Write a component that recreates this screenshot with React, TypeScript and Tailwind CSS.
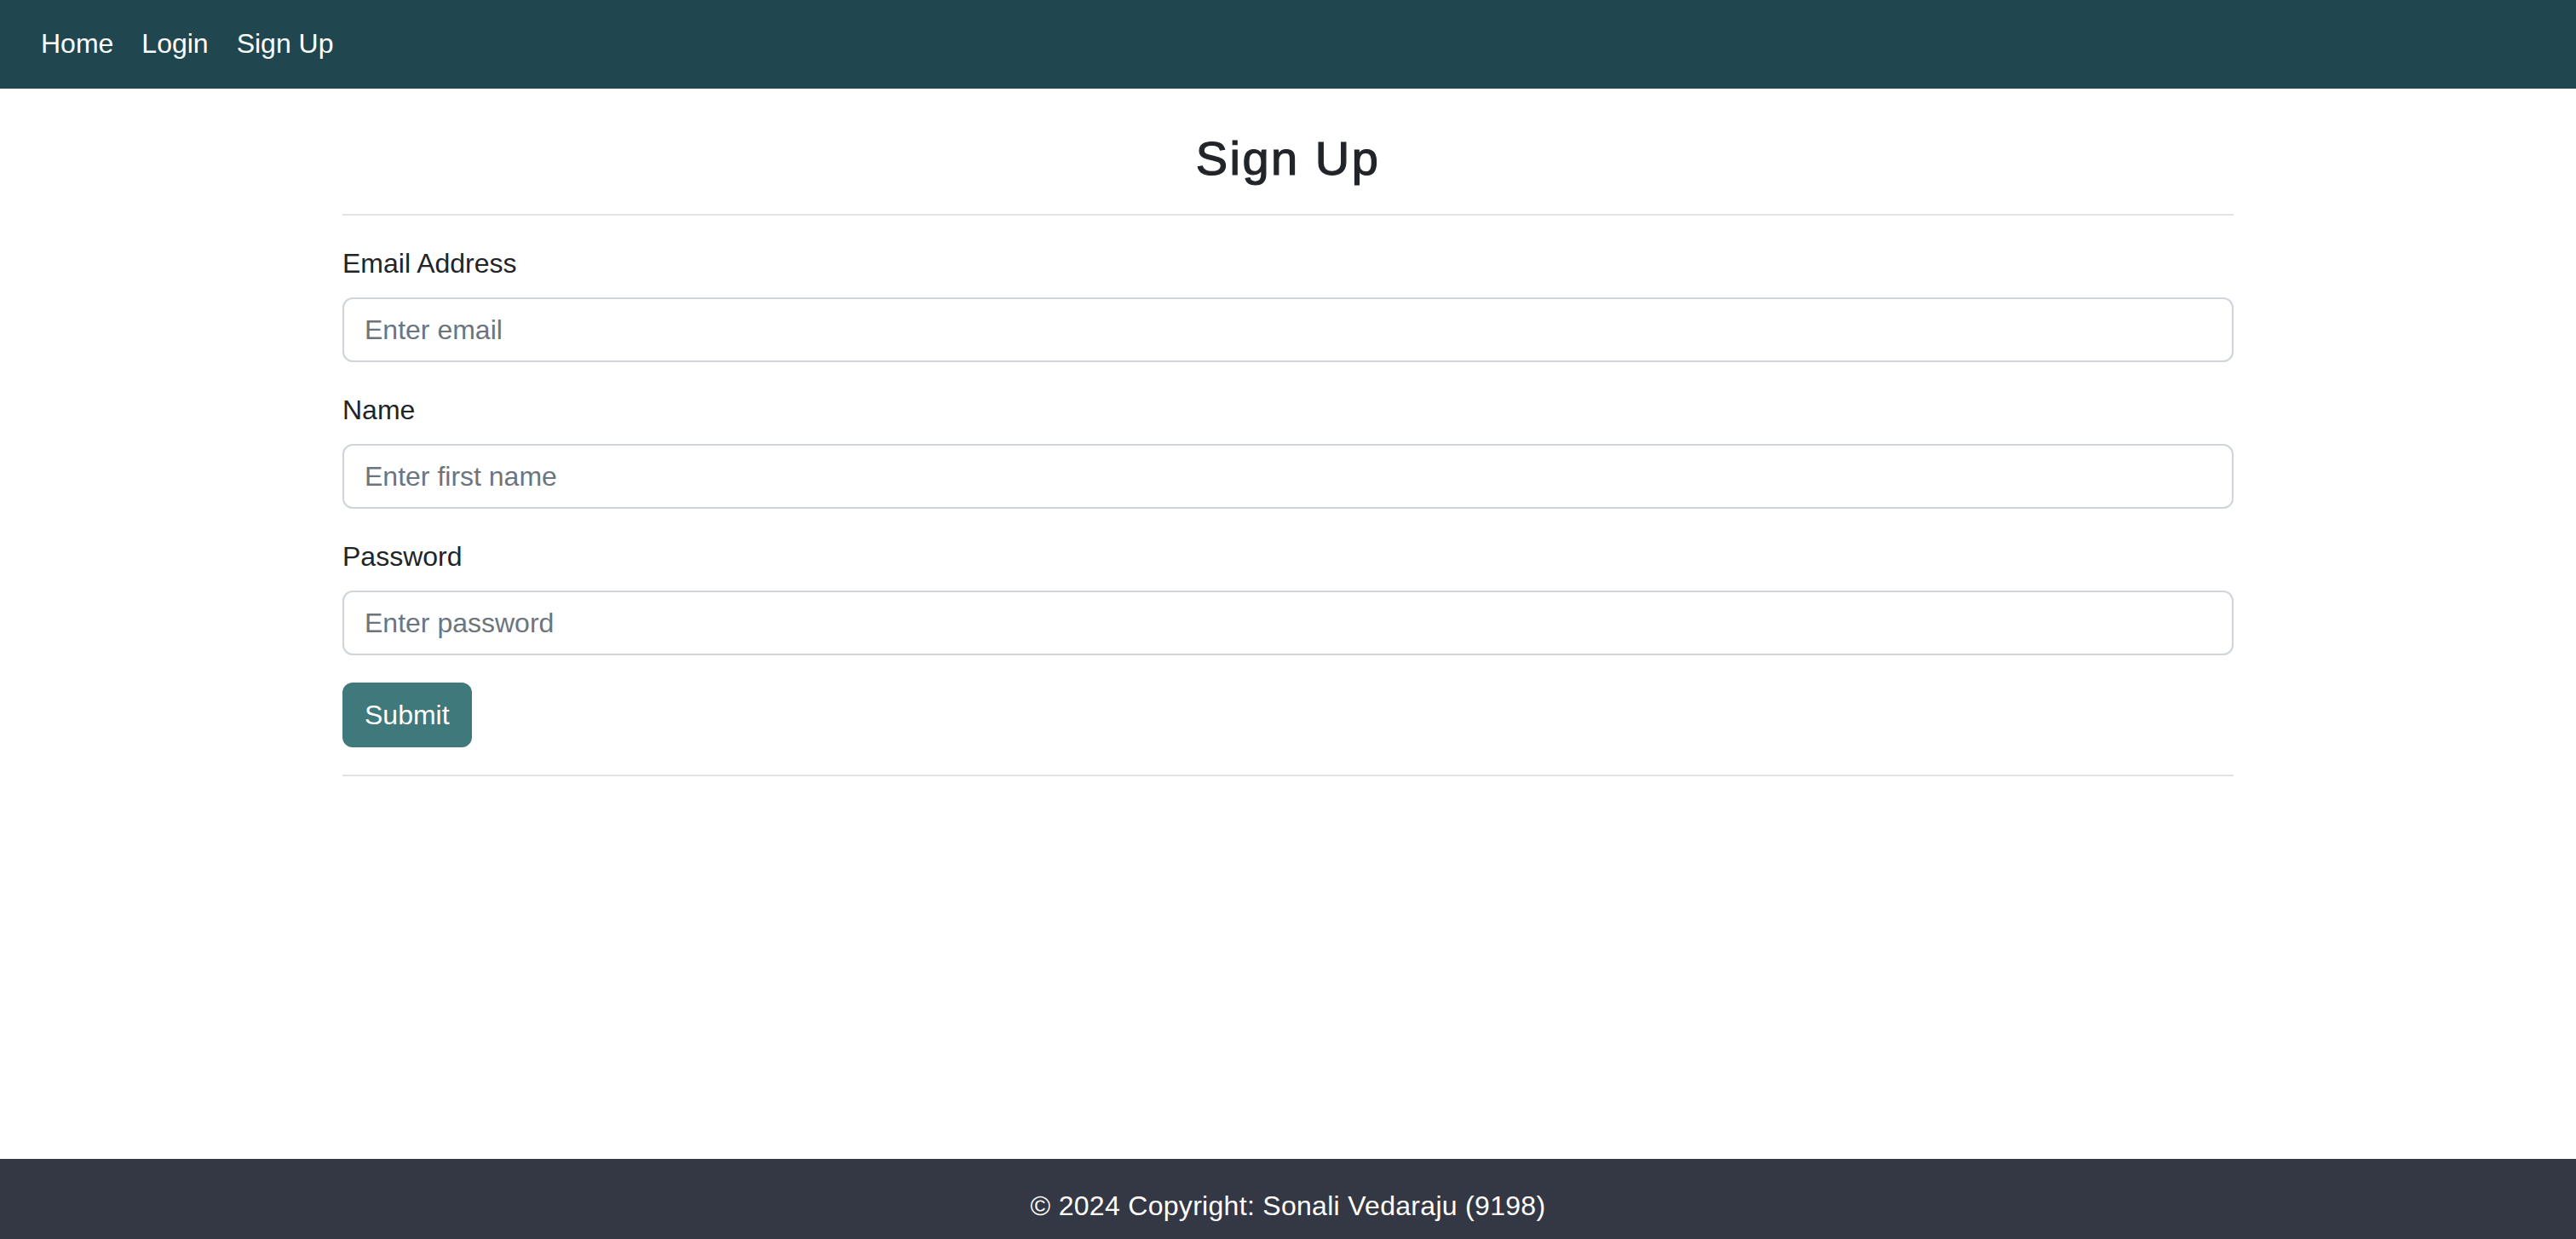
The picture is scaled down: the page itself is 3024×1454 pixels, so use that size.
export default function App() {
  return (
    <div className="min-h-screen flex flex-col bg-white text-[#212529] font-['Liberation_Sans',Arial,sans-serif]">
      {/* Navbar */}
      <nav className="h-[104px] bg-[#20474f] flex items-center pl-[32px] pb-[2px]">
        <a href="#" className="px-[16px] text-[32px] leading-[48px] text-white">
          Home
        </a>
        <a href="#" className="px-[17px] text-[32px] leading-[48px] text-white">
          Login
        </a>
        <a href="#" className="px-[16px] text-[32px] leading-[48px] text-white">
          Sign Up
        </a>
      </nav>

      {/* Form */}
      <main className="w-[2220px] mx-auto pt-[48px]">
        <h2 className="text-center text-[56px] leading-[67px] font-normal tracking-[2.5px] [-webkit-text-stroke:1.2px_#212529]">
          Sign Up
        </h2>
        <hr className="my-[32px] border-0 border-t-2 border-[#e2e3e4]" />

        <form onSubmit={(e) => e.preventDefault()}>
          <div className="mb-[32px]">
            <label className="block mb-[16px] text-[32px] leading-[48px]">
              Email Address
            </label>
            <input
              type="email"
              placeholder="Enter email"
              className="block w-full h-[76px] px-[24px] text-[32px] border-2 border-[#ced4da] rounded-[12px] placeholder:text-[#6c757d] outline-none"
            />
          </div>
          <div className="mb-[32px]">
            <label className="block mb-[16px] text-[32px] leading-[48px]">
              Name
            </label>
            <input
              type="text"
              placeholder="Enter first name"
              className="block w-full h-[76px] px-[24px] text-[32px] border-2 border-[#ced4da] rounded-[12px] placeholder:text-[#6c757d] outline-none"
            />
          </div>
          <div className="mb-[32px]">
            <label className="block mb-[16px] text-[32px] leading-[48px]">
              Password
            </label>
            <input
              type="password"
              placeholder="Enter password"
              className="block w-full h-[76px] px-[24px] text-[32px] border-2 border-[#ced4da] rounded-[12px] placeholder:text-[#6c757d] outline-none"
            />
          </div>
          <button
            type="submit"
            className="h-[76px] px-[26px] bg-[#3f797b] text-white text-[32px] leading-[48px] rounded-[12px]"
          >
            Submit
          </button>
        </form>
        <hr className="mt-[32px] border-0 border-t-2 border-[#e2e3e4]" />
      </main>

      {/* Footer */}
      <footer className="mt-auto h-[94px] bg-[#343844] pt-[31px] text-center text-white text-[32px] leading-[48px] tracking-[0.3px]">
        © 2024 Copyright: Sonali Vedaraju (9198)
      </footer>
    </div>
  );
}
